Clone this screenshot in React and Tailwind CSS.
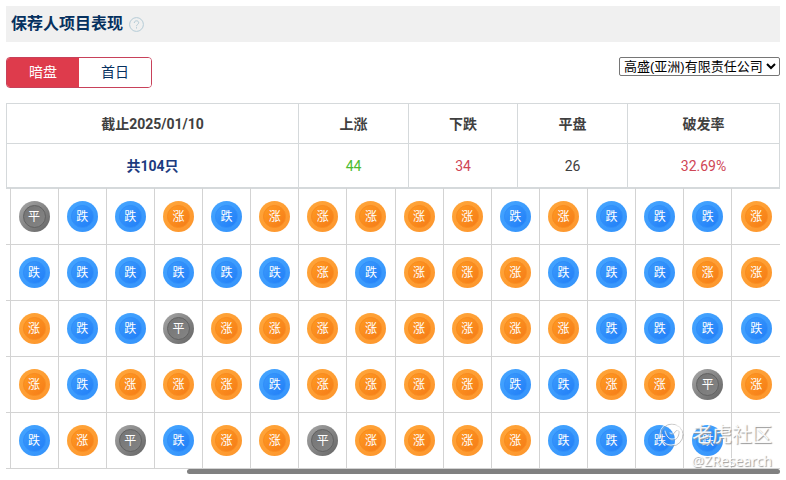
import React, { useState } from 'react';

const tabs = ['暗盘', '首日'];

const sponsors = ['高盛(亚洲)有限责任公司'];

const rows = [
  '平跌跌涨跌涨涨涨涨涨跌涨跌跌跌涨',
  '跌跌跌跌跌跌涨跌涨涨涨跌跌跌涨涨',
  '涨跌跌平涨涨涨涨涨涨涨涨跌跌跌跌',
  '涨跌涨涨涨跌涨涨涨涨跌跌涨涨平涨',
  '跌涨平跌涨涨平涨涨涨涨跌跌跌跌 ',
];

const coinStyles = {
  涨: { outer: 'from-[#ffa63a] to-[#fd952c]', inner: 'from-[#ff9a22] to-[#f57c18] border-[#f98c20]' },
  跌: { outer: 'from-[#45a5ff] to-[#3492fb]', inner: 'from-[#3b9afc] to-[#217ff8] border-[#318ffa]' },
  平: { outer: 'from-[#a8a8a8] to-[#646464]', inner: 'from-[#747474] to-[#858585] border-[#626262]' },
};

const Coin = ({ type }) => {
  const style = coinStyles[type];
  return (
    <span className={`mx-auto flex size-[31px] items-center justify-center rounded-full bg-linear-to-br ${style.outer}`}>
      <span className={`flex size-[23px] items-center justify-center rounded-full border bg-linear-to-br text-xs leading-none text-white ${style.inner}`}>
        {type}
      </span>
    </span>
  );
};

const HelpIcon = () => (
  <svg width="15" height="15" viewBox="0 0 15 15" fill="none" stroke="#b4cbd6" strokeWidth="1">
    <circle cx="7.5" cy="7.5" r="6.9" />
    <path d="M5.3 6C5.3 4.6 6.2 3.8 7.5 3.8s2.2.8 2.2 2c0 1.4-2.2 1.7-2.2 3.4" />
    <path d="M7.5 10.2v1.3" />
  </svg>
);

const Watermark = () => (
  <div className="pointer-events-none absolute right-2 -bottom-1 flex flex-col items-end text-white/90 [text-shadow:1px_1px_1px_#999]">
    <div className="flex items-center gap-2">
      <svg width="25" height="26" viewBox="0 0 25 26" fill="none" strokeLinecap="round" strokeLinejoin="round">
        <g stroke="#aaa" strokeOpacity="0.7" transform="translate(1 1)">
          <circle cx="12" cy="12" r="11" />
          <path d="M6 9c1 5 4 8 7 8 4 0 6-4 6-8 0-2-3-2-4 0s-2 3-4 2" />
        </g>
        <g stroke="#fff" strokeOpacity="0.75">
          <circle cx="12" cy="12" r="11" />
          <path d="M6 9c1 5 4 8 7 8 4 0 6-4 6-8 0-2-3-2-4 0s-2 3-4 2" />
        </g>
      </svg>
      <span className="text-xl leading-7">老虎社区</span>
    </div>
    <span className="font-['Noto_Sans','Noto_Sans_CJK_SC',sans-serif] text-sm leading-6">@ZResearch</span>
  </div>
);

const App = () => {
  const [activeTab, setActiveTab] = useState('暗盘');
  const [sponsor, setSponsor] = useState(sponsors[0]);

  return (
    <main className="bg-white p-1.5 font-[Roboto,'Noto_Sans_CJK_SC',sans-serif] text-sm text-[#404040]">
      <header className="flex h-9 items-center gap-1.5 bg-[#f0f0f0] px-[5px]">
        <h1 className="text-base font-bold text-[#06315f]">保荐人项目表现</h1>
        <button type="button" aria-label="说明">
          <HelpIcon />
        </button>
      </header>

      <div className="mt-[15px] flex items-start justify-between">
        <div className="flex h-[31px] w-[146px] overflow-hidden rounded border border-[#c8415a]">
          {tabs.map(tab => (
            <button
              key={tab}
              type="button"
              onClick={() => setActiveTab(tab)}
              className={`flex-1 pb-0.5 ${activeTab === tab ? 'bg-[#de3b4c] text-white' : 'bg-white text-[#06315f]'}`}
            >
              {tab}
            </button>
          ))}
        </div>
        <select
          aria-label="保荐人"
          value={sponsor}
          onChange={e => setSponsor(e.target.value)}
          className="h-[19px] w-[161px] rounded-xs border border-[#767676] bg-white font-['Liberation_Sans','Noto_Sans_CJK_SC',sans-serif] text-[13px] leading-4 text-black"
        >
          {sponsors.map(name => (
            <option key={name}>{name}</option>
          ))}
        </select>
      </div>

      <table className="mt-[15px] w-full table-fixed border-collapse text-center [&_td]:border [&_td]:border-[#d5d9db] [&_th]:border [&_th]:border-[#d5d9db]">
        <colgroup>
          <col className="w-[292px]" />
          <col className="w-[110px]" />
          <col className="w-[109px]" />
          <col className="w-[110px]" />
          <col />
        </colgroup>
        <thead>
          <tr className="h-10">
            <th>截止2025/01/10</th>
            <th>上涨</th>
            <th>下跌</th>
            <th>平盘</th>
            <th>破发率</th>
          </tr>
        </thead>
        <tbody>
          <tr className="h-11">
            <td className="font-bold text-[#1c3b80]">共104只</td>
            <td className="text-[#4cbb30]">44</td>
            <td className="text-[#cf4555]">34</td>
            <td>26</td>
            <td className="text-[#cf4555]">32.69%</td>
          </tr>
        </tbody>
      </table>

      <div className="relative">
        <table className="w-full table-fixed border-collapse border-t border-[#d5d9db]">
          <colgroup>
            <col className="w-1" />
          </colgroup>
          <tbody>
            {rows.map((row, i) => (
              <tr key={i} className="h-14 border-b border-[#d3d3d3]">
                <td />
                {[...row].map((type, j) => (
                  <td key={j} className="border-l border-[#d3d3d3]">
                    {type !== ' ' && <Coin type={type} />}
                  </td>
                ))}
              </tr>
            ))}
          </tbody>
        </table>
        <Watermark />
      </div>
      {/* Scroll thumb, parked at the latest projects */}
      <div className="ml-auto h-[5px] w-[593px] max-w-full rounded-full bg-[#808080]" />
    </main>
  );
};

export default App;
